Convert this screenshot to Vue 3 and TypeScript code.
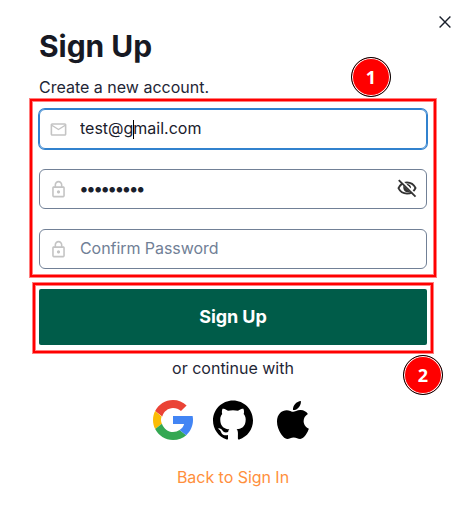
<script setup lang="ts">
import { ref } from 'vue'

const email = ref('test@gmail.com')
const password = ref('secret123')
const confirm = ref('')
</script>

<template>
  <main class="modal">
    <button class="close" aria-label="Close">
      <svg viewBox="0 0 12 12"><path d="M.6.6l10.8 10.8M11.4.6L.6 11.4" /></svg>
    </button>
    <h1>Sign Up</h1>
    <p class="lead">Create a new account.</p>

    <form class="form" @submit.prevent>
      <div class="field focused">
        <svg class="lead-icon" viewBox="0 0 24 24"><path d="M22 6c0-1.1-.9-2-2-2H4c-1.1 0-2 .9-2 2v12c0 1.1.9 2 2 2h16c1.1 0 2-.9 2-2V6zm-2 0-8 5-8-5h16zm0 12H4V8l8 5 8-5v10z" /></svg>
        <input v-model="email" type="text" aria-label="Email" />
        <i class="caret"></i>
      </div>
      <div class="field">
        <svg class="lead-icon" viewBox="0 0 24 24"><path d="M18 8h-1V6c0-2.76-2.24-5-5-5S7 3.240 7 6v2H6c-1.1 0-2 .9-2 2v10c0 1.1.9 2 2 2h12c1.1 0 2-.9 2-2V10c0-1.1-.9-2-2-2zM9 6c0-1.660 1.340-3 3-3s3 1.340 3 3v2H9V6zm9 14H6V10h12v10zm-6-3c1.1 0 2-.9 2-2s-.9-2-2-2-2 .9-2 2 .9 2 2 2z" /></svg>
        <input v-model="password" class="secret" type="password" aria-label="Password" />
        <svg class="eye" viewBox="0 0 24 24">
          <path d="M2.700 12.200C4.500 8.200 8 6 12 6s7.500 2.200 9.300 6c-1.800 4-5.300 6.100-9.300 6.100s-7.500-2.100-9.300-5.900z" fill="none" stroke="currentColor" stroke-width="2" />
          <path d="M8 9.500l6.800 6.500c-3.600 2.100-7.600-1-6.800-6.500z" fill="currentColor" />
          <path d="M11.500 8.600c2.400-.4 4.300 1.500 4 3.900" fill="none" stroke="currentColor" stroke-width="1.800" />
          <path d="M4.300 2.200l18 18" fill="none" stroke="#fff" stroke-width="2" />
          <path d="M3 3.300l18.300 18.200" fill="none" stroke="currentColor" stroke-width="2" />
        </svg>
      </div>
      <div class="field">
        <svg class="lead-icon" viewBox="0 0 24 24"><path d="M18 8h-1V6c0-2.760-2.240-5-5-5S7 3.240 7 6v2H6c-1.100 0-2 .9-2 2v10c0 1.100.9 2 2 2h12c1.100 0 2-.9 2-2V10c0-1.100-.9-2-2-2zM9 6c0-1.660 1.340-3 3-3s3 1.340 3 3v2H9V6zm9 14H6V10h12v10zm-6-3c1.100 0 2-.9 2-2s-.9-2-2-2-2 .9-2 2 .9 2 2 2z" /></svg>
        <input v-model="confirm" type="password" placeholder="Confirm Password" />
      </div>
      <button class="submit">Sign Up</button>
    </form>

    <p class="or">or continue with</p>
    <div class="providers">
      <svg viewBox="4 4 40 40" role="img" aria-label="Google">
        <path fill="#EA4335" d="M24 12c3.059 0 5.842 1.154 7.961 3.039l5.657-5.657C34.046 6.053 29.268 4 24 4 16.200 4 9.450 8.460 6.150 15l7.100 5.500C14.700 15.500 19.100 12 24 12z" />
        <path fill="#FBBC05" d="M12 24c0-1.250.2-2.420.6-3.550L6.150 15C4.780 17.700 4 20.760 4 24c0 3.220.77 6.280 2.150 9l6.750-5.300C12.300 26.550 12 25.300 12 24z" />
        <path fill="#34A853" d="M24 44c5.400 0 9.940-1.780 13.250-4.840l-6.700-5.150C28.740 35.200 26.600 36 24 36c-5.050 0-9.300-3.400-11.100-8.300L6.150 33C9.450 39.540 16.200 44 24 44z" />
        <path fill="#4285F4" d="M43.611 20.083H24V28h11.120c-.65 2.450-2.260 4.600-4.570 6.010l6.700 5.150C41.520 35.200 44 29.950 44 24c0-1.341-.138-2.650-.389-3.917z" />
      </svg>
      <svg viewBox="0 0 24 24" role="img" aria-label="GitHub"><path d="M12 .297c-6.630 0-12 5.373-12 12 0 5.303 3.438 9.800 8.205 11.385.6.113.82-.258.82-.577 0-.285-.01-1.040-.015-2.040-3.338.724-4.042-1.610-4.042-1.610C4.422 18.070 3.633 17.700 3.633 17.700c-1.087-.744.084-.729.084-.729 1.205.084 1.838 1.236 1.838 1.236 1.070 1.835 2.809 1.305 3.495.998.108-.776.417-1.305.760-1.605-2.665-.3-5.466-1.332-5.466-5.930 0-1.310.465-2.380 1.235-3.220-.135-.303-.54-1.523.105-3.176 0 0 1.005-.322 3.300 1.230.960-.267 1.980-.399 3-.405 1.020.006 2.040.138 3 .405 2.280-1.552 3.285-1.230 3.285-1.230.645 1.653.24 2.873.120 3.176.765.840 1.230 1.910 1.230 3.220 0 4.610-2.805 5.625-5.475 5.920.42.360.810 1.096.810 2.220 0 1.606-.015 2.896-.015 3.286 0 .315.210.690.825.570C20.565 22.092 24 17.592 24 12.297c0-6.627-5.373-12-12-12" /></svg>
      <svg viewBox="-31 20 448 472" role="img" aria-label="Apple"><path d="M318.700 268.700c-.2-36.700 16.400-64.400 50-84.800-18.800-26.900-47.200-41.700-84.700-44.600-35.500-2.800-74.300 20.700-88.500 20.700-15 0-49.400-19.700-76.400-19.700C63.300 141.200 4 184.800 4 273.500q0 39.300 14.400 81.200c12.800 36.700 59 126.700 107.200 125.200 25.200-.6 43-17.900 75.800-17.900 31.800 0 48.300 17.900 76.400 17.900 48.600-.7 90.400-82.500 102.600-119.300-65.200-30.700-61.700-90-61.700-91.900zm-56.600-164.200c27.300-32.400 24.800-61.900 24-72.500-24.100 1.400-52 16.400-67.900 34.900-17.500 19.800-27.800 44.300-25.600 71.900 26.100 2 49.900-11.400 69.500-34.300z" /></svg>
    </div>
    <a class="back">Back to Sign In</a>

    <div class="mark mark-fields"></div>
    <div class="mark mark-submit"></div>
    <span class="badge one">1</span>
    <span class="badge two">2</span>
  </main>
</template>

<style>
body {
  background: #fff;
}
</style>

<style scoped>
.modal {
  position: relative;
  box-sizing: border-box;
  width: 470px;
  height: 529px;
  padding: 26px 43px 0 39px;
  overflow: hidden;
  display: flex;
  flex-direction: column;
  background: #fff;
  color: #1f2636;
  font: 16px/24px Inter, "Liberation Sans", sans-serif;
}
.close {
  position: absolute;
  top: 16px;
  right: 19px;
  width: 12px;
  height: 12px;
  padding: 0;
  border: 0;
  background: none;
}
.close svg {
  display: block;
  width: 12px;
  height: 12px;
  fill: none;
  stroke: #1a202c;
  stroke-width: 1.4;
}
h1 {
  margin: 0;
  font-size: 30px;
  line-height: 40px;
  font-weight: 700;
  letter-spacing: -0.05px;
  color: #171923;
}
.lead {
  margin: 9px 0 10px;
}
.form {
  display: flex;
  flex-direction: column;
  gap: 20px;
}
.field {
  position: relative;
  box-sizing: border-box;
  display: flex;
  align-items: center;
  height: 40px;
  padding: 0 8px 0 9.4px;
  border: 1px solid #718096;
  border-radius: 6px;
}
.focused {
  border-color: #3182ce;
  box-shadow: 0 0 0 1px #3182ce;
}
.lead-icon {
  flex: none;
  width: 19px;
  height: 19px;
  margin-right: 11.6px;
  fill: #c4c4c4;
}
.eye {
  flex: none;
  width: 22px;
  height: 22px;
  margin-bottom: 2px;
  color: #333;
}
input {
  flex: 1;
  min-width: 0;
  height: 38px;
  box-sizing: border-box;
  padding: 0 0 2px;
  border: 0;
  outline: 0;
  background: none;
  color: #1a202c;
  font: inherit;
}
input::placeholder {
  color: #718096;
  letter-spacing: -0.06px;
  opacity: 1;
}
.secret {
  margin-left: -1px;
  font-size: 17.5px;
  letter-spacing: -2.75px;
}
.caret {
  position: absolute;
  left: 93px;
  top: 10px;
  width: 1px;
  height: 19px;
  background: #000;
}
.submit {
  height: 56px;
  padding: 0;
  border: 0;
  border-radius: 2px;
  background: #005c49;
  color: #fff;
  font: 700 18px/56px Inter, "Liberation Sans", sans-serif;
  letter-spacing: -0.1px;
}
.or {
  margin: 11px 0 20px;
  text-align: center;
}
.providers {
  display: flex;
  justify-content: center;
  gap: 20px;
}
.providers svg {
  width: 40px;
  height: 40px;
}
.back {
  margin-top: 25px;
  text-align: center;
  letter-spacing: -0.04px;
  color: #ff8f3c;
}
.mark {
  position: absolute;
  box-sizing: border-box;
  border: 2px solid #f00;
  box-shadow: 0 0 0 1px rgba(255, 0, 0, 0.5), inset 0 0 0 1px rgba(255, 0, 0, 0.5);
}
.mark-fields {
  left: 30px;
  top: 99px;
  width: 406px;
  height: 178px;
}
.mark-submit {
  left: 33px;
  top: 283px;
  width: 400px;
  height: 70px;
}
.badge {
  position: absolute;
  box-sizing: border-box;
  width: 40px;
  height: 40px;
  border: 1px solid #000;
  border-radius: 50%;
  background: #f00;
  box-shadow: inset 0 0 0 1px #fff;
  color: #fff;
  font: 700 18px/38px "Open Sans", sans-serif;
  text-align: center;
}
.one {
  left: 351px;
  top: 57px;
}
.two {
  left: 403px;
  top: 355px;
}
</style>
